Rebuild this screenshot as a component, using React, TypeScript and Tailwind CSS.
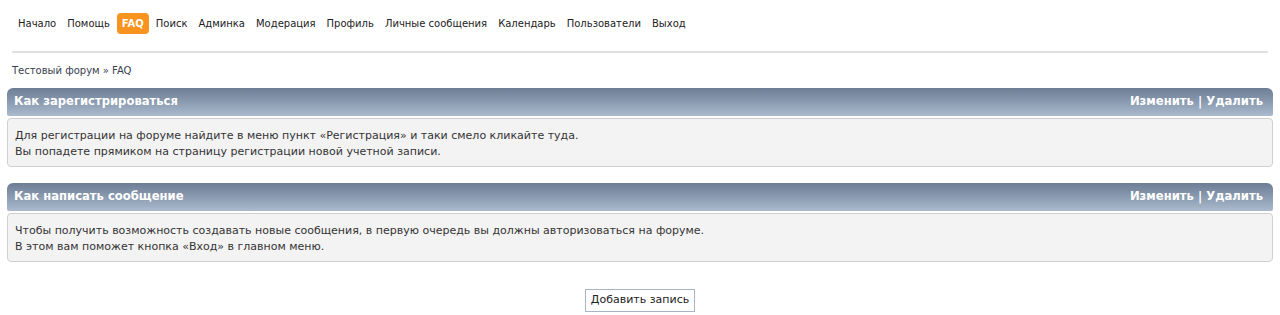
import React from "react";

const navItems = [
  "Начало",
  "Помощь",
  "FAQ",
  "Поиск",
  "Админка",
  "Модерация",
  "Профиль",
  "Личные сообщения",
  "Календарь",
  "Пользователи",
  "Выход",
];

const entries = [
  {
    title: "Как зарегистрироваться",
    lines: [
      "Для регистрации на форуме найдите в меню пункт «Регистрация» и таки смело кликайте туда.",
      "Вы попадете прямиком на страницу регистрации новой учетной записи.",
    ],
  },
  {
    title: "Как написать сообщение",
    lines: [
      "Чтобы получить возможность создавать новые сообщения, в первую очередь вы должны авторизоваться на форуме.",
      "В этом вам поможет кнопка «Вход» в главном меню.",
    ],
  },
];

const FaqEntry = ({ title, lines }: { title: string; lines: string[] }) => {
  return (
    <div className="mb-[16px]">
      <div className="flex h-[28px] items-center justify-between rounded-t-[6px] rounded-b-[2px] bg-gradient-to-b from-[#6c7d95] to-[#abbacd] pr-[10px] pl-[7px] text-[11.6px] font-bold text-white">
        <span>{title}</span>
        <span>
          <a className="cursor-pointer">Изменить</a> | <a className="cursor-pointer">Удалить</a>
        </span>
      </div>
      <div className="mt-[2px] rounded-[4px] border border-[#cfcfcf] bg-[#f3f3f3] px-[7px] pt-[9px] pb-[6px] text-[11px] leading-[16px] text-[#333]">
        {lines.map((l) => (
          <div key={l}>{l}</div>
        ))}
      </div>
    </div>
  );
};

export default function App() {
  return (
    <div className="min-h-[315px] bg-white font-['DejaVu_Sans','Verdana',sans-serif] text-[11px] text-[#222]">
      <div className="flex items-center gap-[11px] px-[18px] pt-[13px] text-[10px]">
        {navItems.map((item) =>
          item === "FAQ" ? (
            <span
              key={item}
              className="-mx-[4px] rounded-[4px] bg-[#f7931e] px-[5px] py-[3px] font-bold text-white"
            >
              {item}
            </span>
          ) : (
            <a key={item} className="cursor-pointer text-[#222]">
              {item}
            </a>
          )
        )}
      </div>
      <div className="mx-[12px] mt-[17px] border-t-2 border-[#e0e0e0]" />
      <div className="px-[12px] pt-[10px] text-[10px] text-[#394150]">
        Тестовый форум » FAQ
      </div>
      <div className="mx-[7px] mt-[10px]">
        {entries.map((e) => (
          <FaqEntry key={e.title} title={e.title} lines={e.lines} />
        ))}
      </div>
      <div className="flex justify-center pt-[11px]">
        <button className="border border-[#a8b4c8] bg-white px-[5px] py-[2px] text-[11px] text-[#222]">
          Добавить запись
        </button>
      </div>
    </div>
  );
}
